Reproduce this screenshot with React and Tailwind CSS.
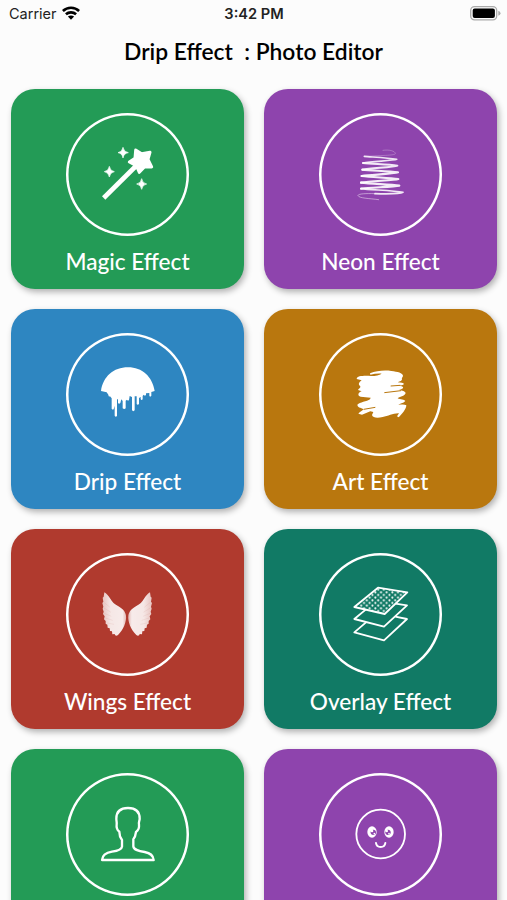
import React from 'react';

function MagicIcon() {
  return (
    <svg viewBox="6 12 213 213" className="size-[71px]" fill="#fff">
      <path d="M41 189L144 87" stroke="#fff" strokeWidth="14" />
      <path
        d="M137 45L155 56L180 52L174 73L185 96L164 95L148 112L139 92L118 81L135 70Z"
        stroke="#fff"
        strokeWidth="9"
        strokeLinejoin="round"
      />
      <path d="M99 37Q101 51 115 53Q101 55 99 69Q97 55 84 53Q97 51 99 37Z" stroke="#fff" strokeWidth="2" />
      <path d="M58 94Q60 108 73 110Q60 112 58 126Q56 112 43 110Q56 108 58 94Z" stroke="#fff" strokeWidth="2" />
      <path d="M155 131Q157 145 170 147Q157 149 155 163Q153 149 140 147Q153 145 155 131Z" stroke="#fff" strokeWidth="2" />
    </svg>
  );
}

function NeonIcon() {
  return (
    <svg viewBox="0 -3 213 213" className="size-[71px]" fill="none" stroke="#fff" strokeLinecap="round" strokeLinejoin="round">
      <path d="M114 31C132 28 151 33 151 41C150 46 120 46 58 49" strokeWidth="1.5" opacity="0.5" />
      <path d="M58 49C78 51 126 53 155 58C145 62 82 64 54 69" strokeWidth="5" opacity="0.85" />
      <path d="M54 69C80 72 127 73 157 77C147 82 80 84 52 89" strokeWidth="6" opacity="0.88" />
      <path d="M52 89C78 92 131 93 159 97C146 102 80 104 50 108" strokeWidth="6.5" opacity="0.9" />
      <path d="M50 108C78 112 132 113 160 117C148 121 78 123 48 128" strokeWidth="6.5" opacity="0.9" />
      <path d="M48 128C78 132 135 133 163 137C145 141 75 142 48 146" strokeWidth="6.5" opacity="0.9" />
      <path d="M48 146C75 150 145 151 174 157C165 162 125 162 90 161" strokeWidth="5" opacity="0.88" />
      <path d="M90 161C65 160 38 161 39 167C43 175 72 175 101 179" strokeWidth="2.5" opacity="0.55" />
    </svg>
  );
}

function DripIcon() {
  return (
    <svg viewBox="6 12 213 213" className="size-[71px]" fill="#fff">
      <path d="M33 108C39 65 70 37 114 37C157 37 187 65 194 108L184 111V122Q181 127 178 122V114L168 115V120Q164 124 161 119L158 123V133Q154 137 152 132V126L147 129V147Q143 152 140 147V124H134V166Q130 171 126 166V126L119 123L117 135Q114 139 111 134L107 137V160Q103 164 98 160V138L94 133L91 144Q87 149 84 144V131L81 134V182Q78 188 74 182V152L71 163Q67 165 65 161V130L60 124Q56 127 55 119L50 112Z" />
    </svg>
  );
}

function ArtIcon() {
  return (
    <svg viewBox="0 12 213 213" className="size-[71px]" fill="#fff">
      <path d="M75 55C94 47 119 45 139 48C158 50 173 54 174 62C174 67 169 68 171 72C172 77 165 79 158 82C168 83 176 83 177 87C175 91 166 91 160 92C168 93 174 94 174 97C176 101 168 103 162 105C172 107 181 109 182 114C180 124 162 125 158 130C166 134 178 133 181 138C175 145 164 146 160 149C170 149 178 147 184 151C184 162 171 177 161 187L156 184L162 175C144 174 130 184 113 186C96 190 83 188 81 180L85 171L76 169L51 179L40 176C45 170 52 168 56 163C48 159 34 157 38 148C43 143 66 139 75 133L77 128L47 125C37 123 38 113 50 109L39 105C41 101 47 100 46 94C38 89 42 81 50 76L35 72C36 62 57 62 78 63C92 63 103 60 110 56C98 55 87 57 76 59Z" />
      <path d="M118 113L168 107M137 93L166 91M56 163L91 157" fill="none" stroke="#b9770e" strokeWidth="3" />
    </svg>
  );
}

function Wing() {
  return (
    <>
      <path
        d="M37 37C43 40 49 47 55 56C61 66 67 72 78 78C91 85 100 94 102 107C104 124 95 148 78 165C73 169 69 167 68 162L61 163L60 154L54 153L53 145L47 143L46 134L41 131L41 123L36 118L38 109L33 102L35 95L32 86L34 80L31 69L34 65L32 53L35 50Z"
        fill="url(#feathers)"
      />
      <path
        d="M37 68L54 82M36 84L57 97M37 100L58 109M40 114L62 121M46 129L66 133"
        fill="none"
        stroke="#b03a2e"
        strokeWidth="2"
        opacity="0.12"
      />
    </>
  );
}

function WingsIcon() {
  return (
    <svg viewBox="0 -3 213 213" className="size-[71px]">
      <defs>
        <linearGradient id="feathers">
          <stop offset="0" stopColor="#fff" stopOpacity="0.7" />
          <stop offset="0.35" stopColor="#fff" stopOpacity="0.88" />
          <stop offset="0.85" stopColor="#fff" stopOpacity="0.9" />
          <stop offset="1" stopColor="#fff" stopOpacity="0.65" />
        </linearGradient>
      </defs>
      <Wing />
      <g transform="translate(211 0) scale(-1 1)">
        <Wing />
      </g>
    </svg>
  );
}

function OverlayIcon() {
  return (
    <svg viewBox="0 -3 213 213" className="size-[71px]" fill="none" stroke="#fff" strokeWidth="5.5" strokeLinejoin="round">
      <defs>
        <pattern id="dots" width="17" height="16" patternUnits="userSpaceOnUse" patternTransform="translate(2 1)">
          <circle cx="4" cy="4" r="3.1" fill="#fff" stroke="none" />
          <circle cx="12.5" cy="12" r="3.1" fill="#fff" stroke="none" />
        </pattern>
      </defs>
      <path d="M99 23L187 37L119 102L28 81Z" fill="url(#dots)" />
      <path d="M63 88L28 117L117 140L186 76L151 71" />
      <path d="M63 127L28 157L117 181L186 117L151 110" />
    </svg>
  );
}

function PersonIcon() {
  return (
    <svg viewBox="0 12 213 213" className="size-[71px]" fill="none" stroke="#fff" strokeWidth="7" strokeLinejoin="round">
      <path d="M30 195C31 180 43 173 60 170C76 168 89 163 90 155V135C84 127 82 118 82 110C75 107 73 95 74 88C75 83 73 78 73 71C73 49 86 39 108 39C131 39 143 50 143 71C143 77 139 83 141 89C142 98 138 107 132 111C131 119 130 126 124 133V154C125 165 141 168 158 171C175 174 184 183 185 195Z" />
    </svg>
  );
}

function SmileyIcon() {
  return (
    <svg viewBox="0 -3 213 213" className="size-[71px]" fill="none" stroke="#fff">
      <circle cx="107" cy="102" r="73" strokeWidth="5.5" />
      <path d="M93 129C95 145 119 145 121 129" strokeWidth="6" strokeLinecap="round" />
      <g stroke="none">
        <ellipse cx="81" cy="96" rx="14" ry="17" fill="#fff" />
        <circle cx="85" cy="97" r="8" fill="#8e44ad" />
        <circle cx="81" cy="93" r="4" fill="#fff" />
        <circle cx="88" cy="101" r="2.5" fill="#fff" />
        <ellipse cx="132" cy="96" rx="14" ry="17" fill="#fff" />
        <circle cx="129" cy="97" r="8" fill="#8e44ad" />
        <circle cx="125" cy="93" r="4" fill="#fff" />
        <circle cx="132" cy="101" r="2.5" fill="#fff" />
      </g>
    </svg>
  );
}

const effects = [
  { title: 'Magic Effect', color: 'bg-[#239b56]', Icon: MagicIcon },
  { title: 'Neon Effect', color: 'bg-[#8e44ad]', Icon: NeonIcon },
  { title: 'Drip Effect', color: 'bg-[#2e86c1]', Icon: DripIcon },
  { title: 'Art Effect', color: 'bg-[#b9770e]', Icon: ArtIcon },
  { title: 'Wings Effect', color: 'bg-[#b03a2e]', Icon: WingsIcon },
  { title: 'Overlay Effect', color: 'bg-[#117a65]', Icon: OverlayIcon },
  { color: 'bg-[#239b56]', Icon: PersonIcon },
  { color: 'bg-[#8e44ad]', Icon: SmileyIcon },
];

function StatusBar() {
  return (
    <div className="grid grid-cols-3 items-center h-7 pl-[9px] pr-[6px] font-[Inter,sans-serif] text-[#222]">
      <div className="flex items-center gap-[5px]">
        <span className="text-[14.5px] leading-none">Carrier</span>
        <svg viewBox="0 0 18 14" className="w-[18px] h-[14px] mb-[2px]" fill="none" stroke="#000" strokeWidth="2.6">
          <path d="M0.9 5C5.4 0.7 12.6 0.7 17.1 5" />
          <path d="M3.9 8.3C6.8 5.7 11.2 5.7 14.1 8.3" />
          <path d="M9 13.8L5.9 10.6C7.6 9.1 10.4 9.1 12.1 10.6Z" fill="#000" stroke="none" />
        </svg>
      </div>
      <div className="text-center text-[14.6px] leading-none font-semibold -ml-[2px]">3:42 PM</div>
      <svg viewBox="0 0 31 15" className="w-[31px] h-[15px] mb-px justify-self-end">
        <rect x="0.7" y="0.7" width="26" height="13.2" rx="3.8" fill="#fcfcfc" stroke="#aaa" strokeWidth="1.3" />
        <rect x="2.7" y="2.5" width="22.2" height="9.6" rx="2" fill="#000" />
        <path d="M28.3 4.8Q30.5 5.5 30.5 7.3Q30.5 9.1 28.3 9.8Z" fill="#aaa" />
      </svg>
    </div>
  );
}

function EffectCard({ title, color, Icon }) {
  return (
    <button
      className={`flex flex-col items-center h-[200px] pt-6 rounded-[24px] shadow-[2px_3px_6px_rgba(0,0,0,0.3)] ${color}`}
    >
      <span className="flex items-center justify-center size-[123px] shrink-0 rounded-full shadow-[inset_0_0_0_2.5px_#fff]">
        <Icon />
      </span>
      {title && <span className="mt-[11px] text-[22.6px] leading-[30px] font-medium text-white whitespace-nowrap">{title}</span>}
    </button>
  );
}

export default function App() {
  return (
    <div className="h-[900px] w-[507px] overflow-hidden bg-[#fcfcfc] font-[Lato,sans-serif]">
      <StatusBar />
      <h1 className="h-[61px] pt-2 text-center text-[22.8px] leading-[30px] font-semibold text-black whitespace-pre">
        {'Drip Effect  : Photo Editor'}
      </h1>
      <div className="grid grid-cols-2 gap-5 pl-[11px] pr-[10px]">
        {effects.map((effect, i) => (
          <EffectCard key={i} {...effect} />
        ))}
      </div>
    </div>
  );
}
